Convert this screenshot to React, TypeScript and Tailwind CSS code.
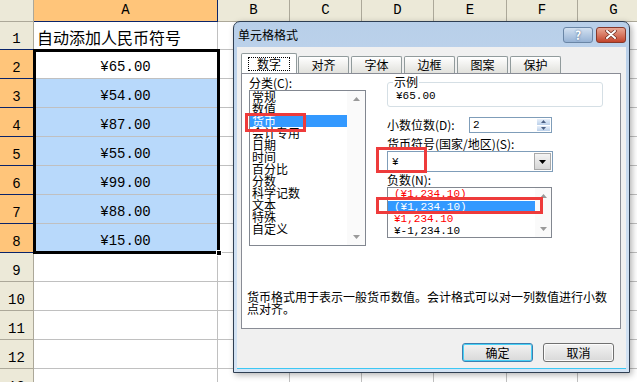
import React from 'react';

const COLS = [
  { label: 'A', w: 'w-[184px]' },
  { label: 'B', w: 'w-[72px]' },
  { label: 'C', w: 'w-[72px]' },
  { label: 'D', w: 'w-[72px]' },
  { label: 'E', w: 'w-[73px]' },
  { label: 'F', w: 'w-[71px]' },
  { label: 'G', w: 'w-[72px]' },
];

const ROWS = [
  { n: 1, h: 'h-[28px]', a: '自动添加人民币符号' },
  { n: 2, h: 'h-[29px]', a: '¥65.00' },
  { n: 3, h: 'h-[29px]', a: '¥54.00' },
  { n: 4, h: 'h-[29px]', a: '¥87.00' },
  { n: 5, h: 'h-[29px]', a: '¥55.00' },
  { n: 6, h: 'h-[29px]', a: '¥99.00' },
  { n: 7, h: 'h-[29px]', a: '¥88.00' },
  { n: 8, h: 'h-[29px]', a: '¥15.00' },
  { n: 9, h: 'h-[29px]', a: '' },
  { n: 10, h: 'h-[29px]', a: '' },
  { n: 11, h: 'h-[29px]', a: '' },
  { n: 12, h: 'h-[29px]', a: '' },
  { n: 13, h: 'h-[29px]', a: '' },
];

const CATEGORIES = ['常规', '数值', '货币', '会计专用', '日期', '时间', '百分比', '分数', '科学记数', '文本', '特殊', '自定义'];

const NEGATIVES = [
  { t: '(¥1,234.10)', cls: 'text-[#FF0000]' },
  { t: '(¥1,234.10)', cls: 'bg-[#3399FF] text-white' },
  { t: '¥1,234.10', cls: 'text-[#FF0000]' },
  { t: '¥-1,234.10', cls: 'text-black' },
];

const TABS = ['对齐', '字体', '边框', '图案', '保护'];

const cjk = "font-['Noto_Sans_CJK_SC',sans-serif]";
const mono = "font-['Liberation_Mono','Noto_Sans_CJK_SC',monospace]";

function Arrow({ up }: { up?: boolean }) {
  return (
    <svg width="7" height="4" viewBox="0 0 7 4">
      <path d={up ? 'M0 4 L3.5 0 L7 4 Z' : 'M0 0 L3.5 4 L7 0 Z'} fill="#9A9A9A" />
    </svg>
  );
}

function ScrollBar({ w }: { w: string }) {
  return (
    <div className={`${w} flex shrink-0 flex-col items-center justify-between bg-[#FAFAFA] py-[6px]`}>
      <Arrow up />
      <Arrow />
    </div>
  );
}

function Sheet() {
  return (
    <div className="flex flex-col">
      <div className="flex h-[22px]">
        <div className="w-[34px] shrink-0 border-r border-b border-[#ACA899] bg-[#ECE9D8]" />
        {COLS.map((c, i) => (
          <div
            key={c.label}
            className={`${c.w} flex shrink-0 items-center justify-center border-r border-b text-[14px] ${mono} ${
              i === 0 ? 'border-[#0A246A] bg-[#FFC57A]' : 'border-[#ACA899] bg-[#ECE9D8]'
            }`}>
            {c.label}
          </div>
        ))}
      </div>
      {ROWS.map((r) => {
        const sel = r.n >= 2 && r.n <= 8;
        return (
          <div key={r.n} className="flex">
            <div
              className={`${r.h} flex w-[34px] shrink-0 items-end justify-center border-r border-b pb-[1px] text-[14px] leading-[18px] ${mono} ${
                sel ? 'border-b-[#0A246A] border-r-[#ACA899] bg-[#FFC57A]' : r.n === 1 ? 'border-b-[#0A246A] border-r-[#ACA899] bg-[#ECE9D8]' : 'border-[#ACA899] bg-[#ECE9D8]'
              }`}>
              {r.n}
            </div>
            {COLS.map((c, i) => (
              <div
                key={c.label}
                className={`${c.w} ${r.h} flex shrink-0 items-end border-r border-b border-[#C0C0C0] ${
                  i === 0 && r.n >= 3 && r.n <= 8 ? 'bg-[#B8D9FB]' : 'bg-white'
                } ${i === 0 && r.n === 1 ? `pb-[2px] pl-[3px] text-[16px] leading-[20px] ${cjk}` : `justify-center pb-[3px] text-[14px] leading-[16px] ${mono}`}`}>
                {i === 0 ? r.a : ''}
              </div>
            ))}
          </div>
        );
      })}
    </div>
  );
}

function Dialog() {
  return (
    <div className={`absolute top-[21px] left-[233px] z-10 flex h-[352px] w-[397px] flex-col rounded-t-[7px] border border-[#2E3E52] bg-linear-to-b from-[#B8CFE9] via-[#CADCF0] to-[#D3E3F4] text-[12px] text-black shadow-[2px_2px_6px_rgba(0,0,0,0.3)] ${cjk}`}>
      <div className="flex h-[25px] shrink-0 items-center pl-[4px]">
        <span className="text-[12px] leading-[14px]">单元格格式</span>
        <div className="ml-auto flex gap-[3px] pr-[3px]">
          <div className="flex h-[16px] w-[30px] items-center justify-center rounded-[3px] border border-[#6A86A6] bg-linear-to-b from-[#D3E1F1] to-[#97B3D5] text-[12px] leading-[12px] font-bold text-white [text-shadow:0_0_2px_#3A5A80]">
            ?
          </div>
          <div className="flex h-[16px] w-[30px] items-center justify-center rounded-[3px] border border-[#86382A] bg-linear-to-b from-[#E9A895] to-[#C2432B]">
            <svg width="12" height="9" viewBox="0 0 12 9">
              <path d="M2 1 L10 8 M10 1 L2 8" stroke="#6B2A1E" strokeWidth="3.4" strokeLinecap="round" />
              <path d="M2 1 L10 8 M10 1 L2 8" stroke="#FFFFFF" strokeWidth="2" strokeLinecap="round" />
            </svg>
          </div>
        </div>
      </div>
      <div className="mx-[3px] mb-[3px] flex flex-1 flex-col bg-[#F0F0F0] shadow-[inset_0_-1px_0_#3CC8F4]">
        <div className="mt-[6px] ml-[4px] flex h-[20px] items-end">
          <div className="flex h-[20px] w-[56px] items-center justify-center rounded-t-[2px] border border-b-0 border-[#919B9C] bg-white">
            <span className="border border-dotted border-black px-[8px] text-[12px] leading-[12px]">数字</span>
          </div>
          {TABS.map((t, i) => (
            <div
              key={t}
              className={`flex h-[17px] w-[51px] items-center justify-center rounded-t-[2px] border border-b-0 border-[#919B9C] bg-linear-to-b from-white to-[#E1E1DC] leading-[14px] ${i === 0 ? 'ml-[1px]' : 'ml-[2px]'}`}>
              {t}
            </div>
          ))}
        </div>
        <div className="ml-[4px] flex h-[256px] w-[380px] flex-col border border-[#898C95] bg-white">
          <div className="flex">
            <div className="flex flex-col pt-[2px] pl-[7px]">
              <span className="leading-[14px]">分类(C):</span>
              <div className="flex h-[156px] w-[117px] border border-[#828790]">
                <div className="flex flex-1 flex-col overflow-hidden">
                  {CATEGORIES.map((c, i) => (
                    <div key={c} className={`h-[12px] shrink-0 pl-[2px] leading-[12px] whitespace-nowrap ${i === 2 ? 'bg-[#3399FF] text-white' : ''}`}>
                      {c}
                    </div>
                  ))}
                </div>
                <ScrollBar w="w-[18px]" />
              </div>
            </div>
            <div className="ml-[21px] flex w-[217px] flex-col pt-[1px]">
              <fieldset className="w-[216px] rounded-[3px] border border-[#D5DFE5]">
                <legend className="ml-[5px] px-[1px] leading-[14px]">示例</legend>
                <div className={`h-[17px] pl-[8px] text-[11px] leading-[15px] ${mono}`}>¥65.00</div>
              </fieldset>
              <div className="mt-[10px] flex h-[16px] items-center">
                <span className="w-[82px] leading-[14px]">小数位数(D):</span>
                <div className="flex h-[16px] w-[83px] border border-[#7F9DB9] bg-white">
                  <span className={`flex-1 pl-[3px] text-[11px] leading-[14px] ${mono}`}>2</span>
                  <div className="flex w-[15px] flex-col gap-[1px] p-[1px]">
                    <div className="flex flex-1 items-center justify-center bg-linear-to-b from-[#E8F0FA] to-[#BBD0EA]">
                      <svg width="5" height="3" viewBox="0 0 5 3"><path d="M0 3 L2.5 0 L5 3 Z" fill="#4D6185" /></svg>
                    </div>
                    <div className="flex flex-1 items-center justify-center bg-linear-to-b from-[#E8F0FA] to-[#BBD0EA]">
                      <svg width="5" height="3" viewBox="0 0 5 3"><path d="M0 0 L2.5 3 L5 0 Z" fill="#4D6185" /></svg>
                    </div>
                  </div>
                </div>
              </div>
              <span className="mt-[4px] leading-[14px]">货币符号(国家/地区)(S):</span>
              <div className="flex h-[21px] w-[166px] items-center border border-[#7F9DB9] bg-white">
                <span className={`flex-1 pl-[4px] text-[11px] leading-[14px] ${mono}`}>¥</span>
                <div className="mr-[1px] flex h-[17px] w-[17px] items-center justify-center border border-[#A9A9A9] bg-linear-to-b from-[#F4F4F4] to-[#D6D6D6]">
                  <svg width="7" height="4" viewBox="0 0 7 4"><path d="M0 0 L3.5 4 L7 0 Z" fill="#000" /></svg>
                </div>
              </div>
              <span className="mt-[1px] leading-[14px]">负数(N):</span>
              <div className="flex h-[51px] w-[165px] border border-[#828790]">
                <div className="flex flex-1 flex-col overflow-hidden">
                  {NEGATIVES.map((n, i) => (
                    <div key={i} className={`h-[12px] shrink-0 pl-[6px] text-[11px] leading-[12px] whitespace-nowrap ${mono} ${n.cls} ${i === 1 ? 'my-[0.5px]' : ''}`}>
                      {n.t}
                    </div>
                  ))}
                </div>
                <ScrollBar w="w-[16px]" />
              </div>
            </div>
          </div>
          <p className="mt-[45px] w-[371px] pl-[5px] leading-[12px]">
            货币格式用于表示一般货币数值。会计格式可以对一列数值进行小数点对齐。
          </p>
        </div>
        <div className="mt-[14px] flex justify-end gap-[10px] pr-[12px]">
          <div className="flex h-[19px] w-[71px] items-center justify-center rounded-[3px] border border-[#3C7FB1] bg-linear-to-b from-[#F2F2F2] to-[#D9D9D9] leading-[14px] shadow-[inset_0_0_0_1px_#48D1F6]">
            确定
          </div>
          <div className="flex h-[19px] w-[71px] items-center justify-center rounded-[3px] border border-[#707070] bg-linear-to-b from-[#F2F2F2] to-[#D9D9D9] leading-[14px] shadow-[inset_0_0_0_1px_#FCFCFC]">
            取消
          </div>
        </div>
      </div>
    </div>
  );
}

export default function App() {
  return (
    <div className="relative h-[382px] w-[637px] overflow-hidden bg-white">
      <Sheet />
      {/* selection outline for A2:A8 */}
      <div className="absolute top-[49px] left-[33px] h-[205px] w-[187px] border-[3px] border-black" />
      <div className="absolute top-[250px] left-[216px] h-[6px] w-[6px] border border-white bg-black" />
      <Dialog />
      {/* red annotation boxes */}
      <div className="absolute top-[113px] left-[245px] z-20 h-[19px] w-[61px] border-[3px] border-[#EE3B3B]" />
      <div className="absolute top-[147px] left-[376px] z-20 h-[26px] w-[51px] border-[3px] border-[#EE3B3B]" />
      <div className="absolute top-[197px] left-[376px] z-20 h-[17px] w-[167px] border-[3px] border-[#EE3B3B]" />
    </div>
  );
}
